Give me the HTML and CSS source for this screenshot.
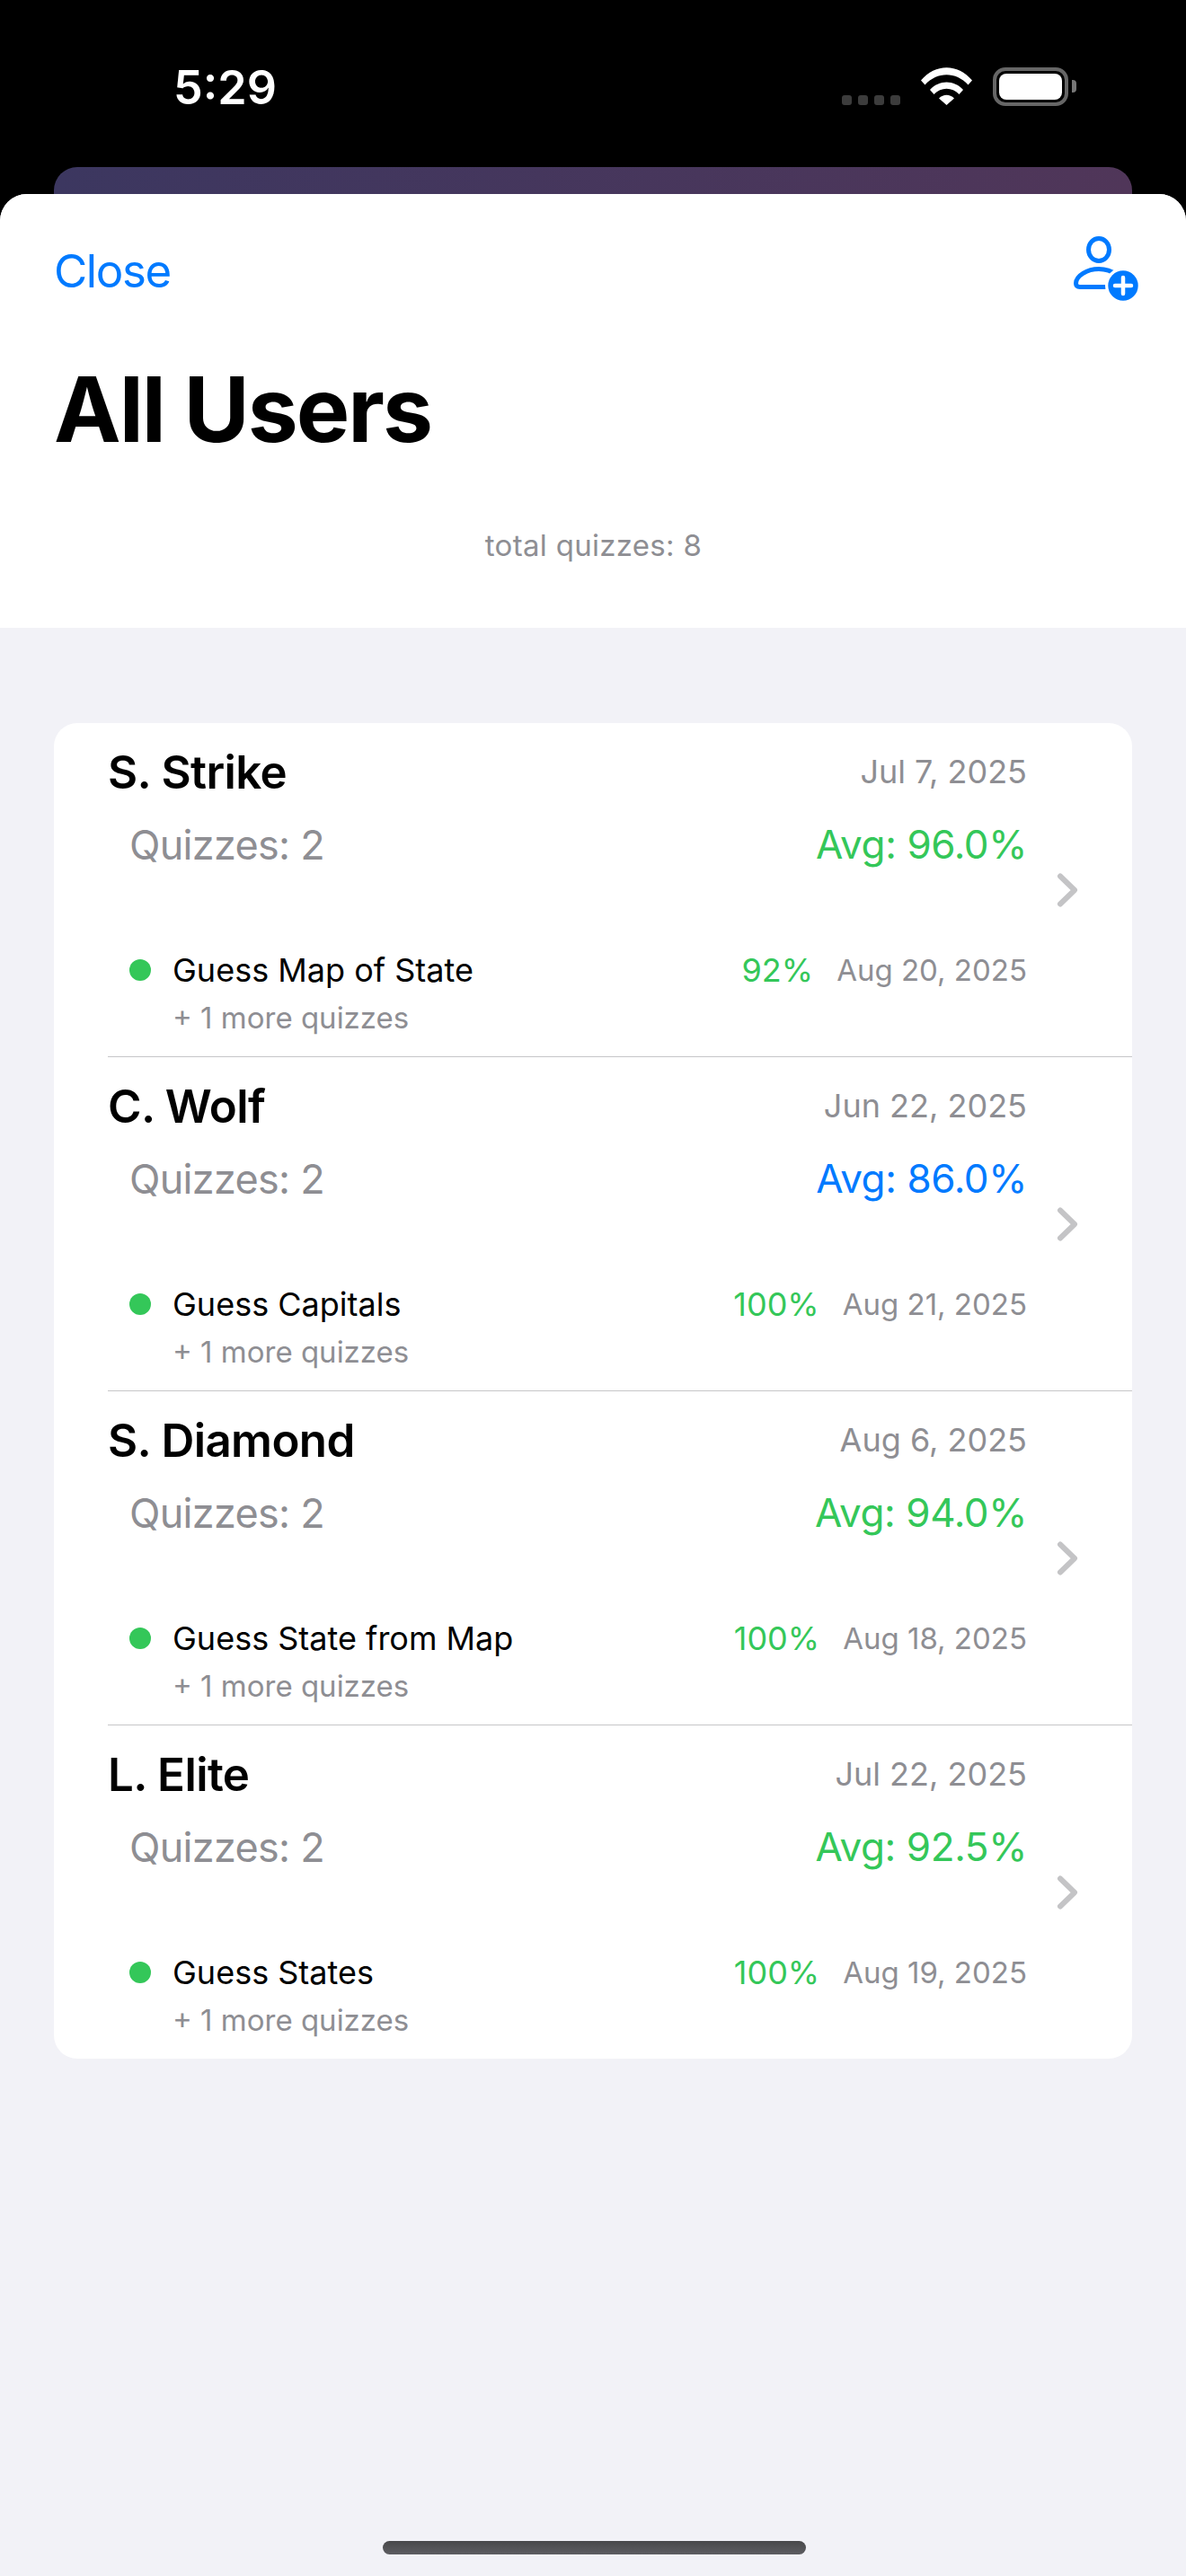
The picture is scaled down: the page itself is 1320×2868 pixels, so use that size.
FILE: index.html
```html
<!DOCTYPE html>
<html lang="en">
<head>
<meta charset="utf-8">
<title>All Users</title>
<link rel="stylesheet" href="styles.css">
</head>
<body>
<div class="screen">
  <div class="status">
    <span class="time">5:29</span>
    <div class="status-icons">
      <div class="signal"><i></i><i></i><i></i><i></i></div>
      <svg class="wifi" width="57" height="42" viewBox="0 0 57 42"><path d="M0 14.5 C16 -4.5 41 -4.5 57 14.5 L52.5 19.5 C39 4.5 18 4.5 4.5 19.5Z" fill="#fff"/><path d="M10 25 C20 13.5 37 13.5 47 25 L42.5 30 C34.5 21.5 22.5 21.5 14.5 30Z" fill="#fff"/><path d="M20 34.5 C25 29.5 32 29.5 37 34.5 L28.5 42Z" fill="#fff"/></svg>
      <div class="battery"><div class="battery-fill"></div></div>
      <div class="battery-nub"></div>
    </div>
  </div>
  <div class="back-card"></div>
  <main class="sheet">
    <header class="sheet-head">
      <div class="nav">
        <span class="close">Close</span>
        <svg class="add-user" width="74" height="76" viewBox="0 0 74 76"><ellipse cx="28" cy="17" rx="11.500" ry="12.500" fill="none" stroke="#007aff" stroke-width="5"/><path d="M40 58.500 H7 C4 58.500 2.500 57 2.500 54.500 C2.500 46 15 38.500 28 38.500 C36 38.500 42 40.500 48 45" fill="none" stroke="#007aff" stroke-width="5" stroke-linecap="round"/><circle cx="55" cy="57" r="20" fill="#fff"/><circle cx="55" cy="57" r="16.700" fill="#007aff"/><path d="M55 48 V66 M46 57 H64" stroke="#fff" stroke-width="4.500" stroke-linecap="round"/></svg>
      </div>
      <h1 class="title">All Users</h1>
      <p class="total">total quizzes: 8</p>
    </header>
    <section class="card">
      <article class="row">
        <div class="row-main">
          <div class="line-name"><span class="name">S. Strike</span><span class="date">Jul 7, 2025</span></div>
          <div class="line-stats"><span class="count">Quizzes: 2</span><span class="avg green">Avg: 96.0%</span></div>
          <div class="line-quiz"><i class="dot"></i><span class="quiz">Guess Map of State</span><span class="pct">92%</span><span class="qdate">Aug 20, 2025</span></div>
          <div class="more">+ 1 more quizzes</div>
        </div>
        <svg class="chev" width="25" height="38" viewBox="0 0 25 38"><path d="M5 3.500 L21 19 L5 34.500" fill="none" stroke="#c4c4c6" stroke-width="6" stroke-linecap="round" stroke-linejoin="round"/></svg>
      </article>
      <article class="row">
        <div class="row-main">
          <div class="line-name"><span class="name">C. Wolf</span><span class="date">Jun 22, 2025</span></div>
          <div class="line-stats"><span class="count">Quizzes: 2</span><span class="avg blue">Avg: 86.0%</span></div>
          <div class="line-quiz"><i class="dot"></i><span class="quiz">Guess Capitals</span><span class="pct">100%</span><span class="qdate">Aug 21, 2025</span></div>
          <div class="more">+ 1 more quizzes</div>
        </div>
        <svg class="chev" width="25" height="38" viewBox="0 0 25 38"><path d="M5 3.500 L21 19 L5 34.500" fill="none" stroke="#c4c4c6" stroke-width="6" stroke-linecap="round" stroke-linejoin="round"/></svg>
      </article>
      <article class="row">
        <div class="row-main">
          <div class="line-name"><span class="name">S. Diamond</span><span class="date">Aug 6, 2025</span></div>
          <div class="line-stats"><span class="count">Quizzes: 2</span><span class="avg green">Avg: 94.0%</span></div>
          <div class="line-quiz"><i class="dot"></i><span class="quiz">Guess State from Map</span><span class="pct">100%</span><span class="qdate">Aug 18, 2025</span></div>
          <div class="more">+ 1 more quizzes</div>
        </div>
        <svg class="chev" width="25" height="38" viewBox="0 0 25 38"><path d="M5 3.500 L21 19 L5 34.500" fill="none" stroke="#c4c4c6" stroke-width="6" stroke-linecap="round" stroke-linejoin="round"/></svg>
      </article>
      <article class="row">
        <div class="row-main">
          <div class="line-name"><span class="name">L. Elite</span><span class="date">Jul 22, 2025</span></div>
          <div class="line-stats"><span class="count">Quizzes: 2</span><span class="avg green">Avg: 92.5%</span></div>
          <div class="line-quiz"><i class="dot"></i><span class="quiz">Guess States</span><span class="pct">100%</span><span class="qdate">Aug 19, 2025</span></div>
          <div class="more">+ 1 more quizzes</div>
        </div>
        <svg class="chev" width="25" height="38" viewBox="0 0 25 38"><path d="M5 3.500 L21 19 L5 34.500" fill="none" stroke="#c4c4c6" stroke-width="6" stroke-linecap="round" stroke-linejoin="round"/></svg>
      </article>
    </section>
    <div class="home-bar"></div>
  </main>
</div>
</body>
</html>
```
FILE: styles.css
```css
* { box-sizing: border-box; }
html, body { margin: 0; padding: 0; }
body { background: #000; font-family: Inter, "Liberation Sans", sans-serif; color: #000; }
.screen { width: 1320px; height: 2868px; display: flex; flex-direction: column; overflow: hidden; background: #000; }

.status { height: 186px; display: flex; justify-content: space-between; align-items: flex-start; padding: 0 122px 0 193px; }
.time { margin-top: 66px; font-size: 52px; line-height: 64px; font-weight: 600; color: #fff; }
.status-icons { display: flex; align-items: flex-start; padding-top: 75px; }
.signal { display: flex; gap: 7px; margin-top: 31px; margin-right: 23px; }
.signal i { width: 11px; height: 11px; border-radius: 3px; background: #3c3c3c; }
.wifi { margin-right: 23px; display: block; }
.battery { width: 84px; height: 43px; border: 4px solid #666; border-radius: 14px; padding: 3px; }
.battery-fill { width: 100%; height: 100%; background: #fff; border-radius: 8px; }
.battery-nub { width: 5px; height: 14px; margin: 14px 0 0 4px; background: #777; border-radius: 0 4px 4px 0; }

.back-card { height: 30px; margin: 0 60px; border-radius: 26px 26px 0 0; background: linear-gradient(90deg, #3c3760, #503659); }

.sheet { flex: 1; display: flex; flex-direction: column; background: #f2f2f7; border-radius: 30px 30px 0 0; overflow: hidden; }
.sheet-head { height: 483px; background: #fff; padding: 0 51px 0 60px; display: flex; flex-direction: column; }
.nav { display: flex; justify-content: space-between; align-items: flex-start; height: 120px; padding-top: 45px; }
.close { font-size: 51px; line-height: 72px; margin-top: 5px; letter-spacing: -1.4px; color: #007aff; }
.add-user { display: block; flex: none; }
.title { margin: 60px 0 0; font-size: 100px; line-height: 120px; font-weight: 700; letter-spacing: -2px; }
.total { margin: 69px 8px 0 0; font-size: 33px; line-height: 44px; letter-spacing: 0.3px; text-align: center; color: #8e8e93; }

.card { margin: 106px 60px 0; background: #fff; border-radius: 26px; overflow: hidden; padding-left: 60px; }
.row { height: 372px; display: flex; align-items: center; border-bottom: 1px solid #c6c6c8; }
.row:last-child { height: 371px; border-bottom: 0; }
.row-main { width: 1023px; padding-top: 24px; align-self: flex-start; }
.chev { margin-left: 32px; display: block; }

.line-name { display: flex; justify-content: space-between; align-items: center; height: 60px; }
.name { font-size: 51px; font-weight: 600; letter-spacing: -0.6px; }
.date { font-size: 36px; color: #8e8e93; }
.line-stats { display: flex; justify-content: space-between; align-items: center; height: 56px; margin-top: 23px; padding-left: 24px; }
.count { font-size: 45px; letter-spacing: -0.7px; color: #8e8e93; }
.avg { font-size: 44px; letter-spacing: -0.4px; }
.green { color: #34c759; }
.blue { color: #007aff; }
.line-quiz { display: flex; align-items: center; height: 44px; margin-top: 90px; padding-left: 24px; }
.dot { width: 24px; height: 24px; border-radius: 50%; background: #34c759; margin-right: 24px; }
.quiz { flex: 1; font-size: 36px; }
.pct { font-size: 36px; color: #34c759; margin-right: 26px; }
.qdate { font-size: 33px; color: #8e8e93; }
.more { margin-top: 11px; padding-left: 72px; font-size: 33px; line-height: 40px; color: #8e8e93; }

.home-bar { width: 471px; height: 15px; margin: 537px auto 0 426px; border-radius: 8px; background: linear-gradient(#48484a, #5e5e62); }
```
